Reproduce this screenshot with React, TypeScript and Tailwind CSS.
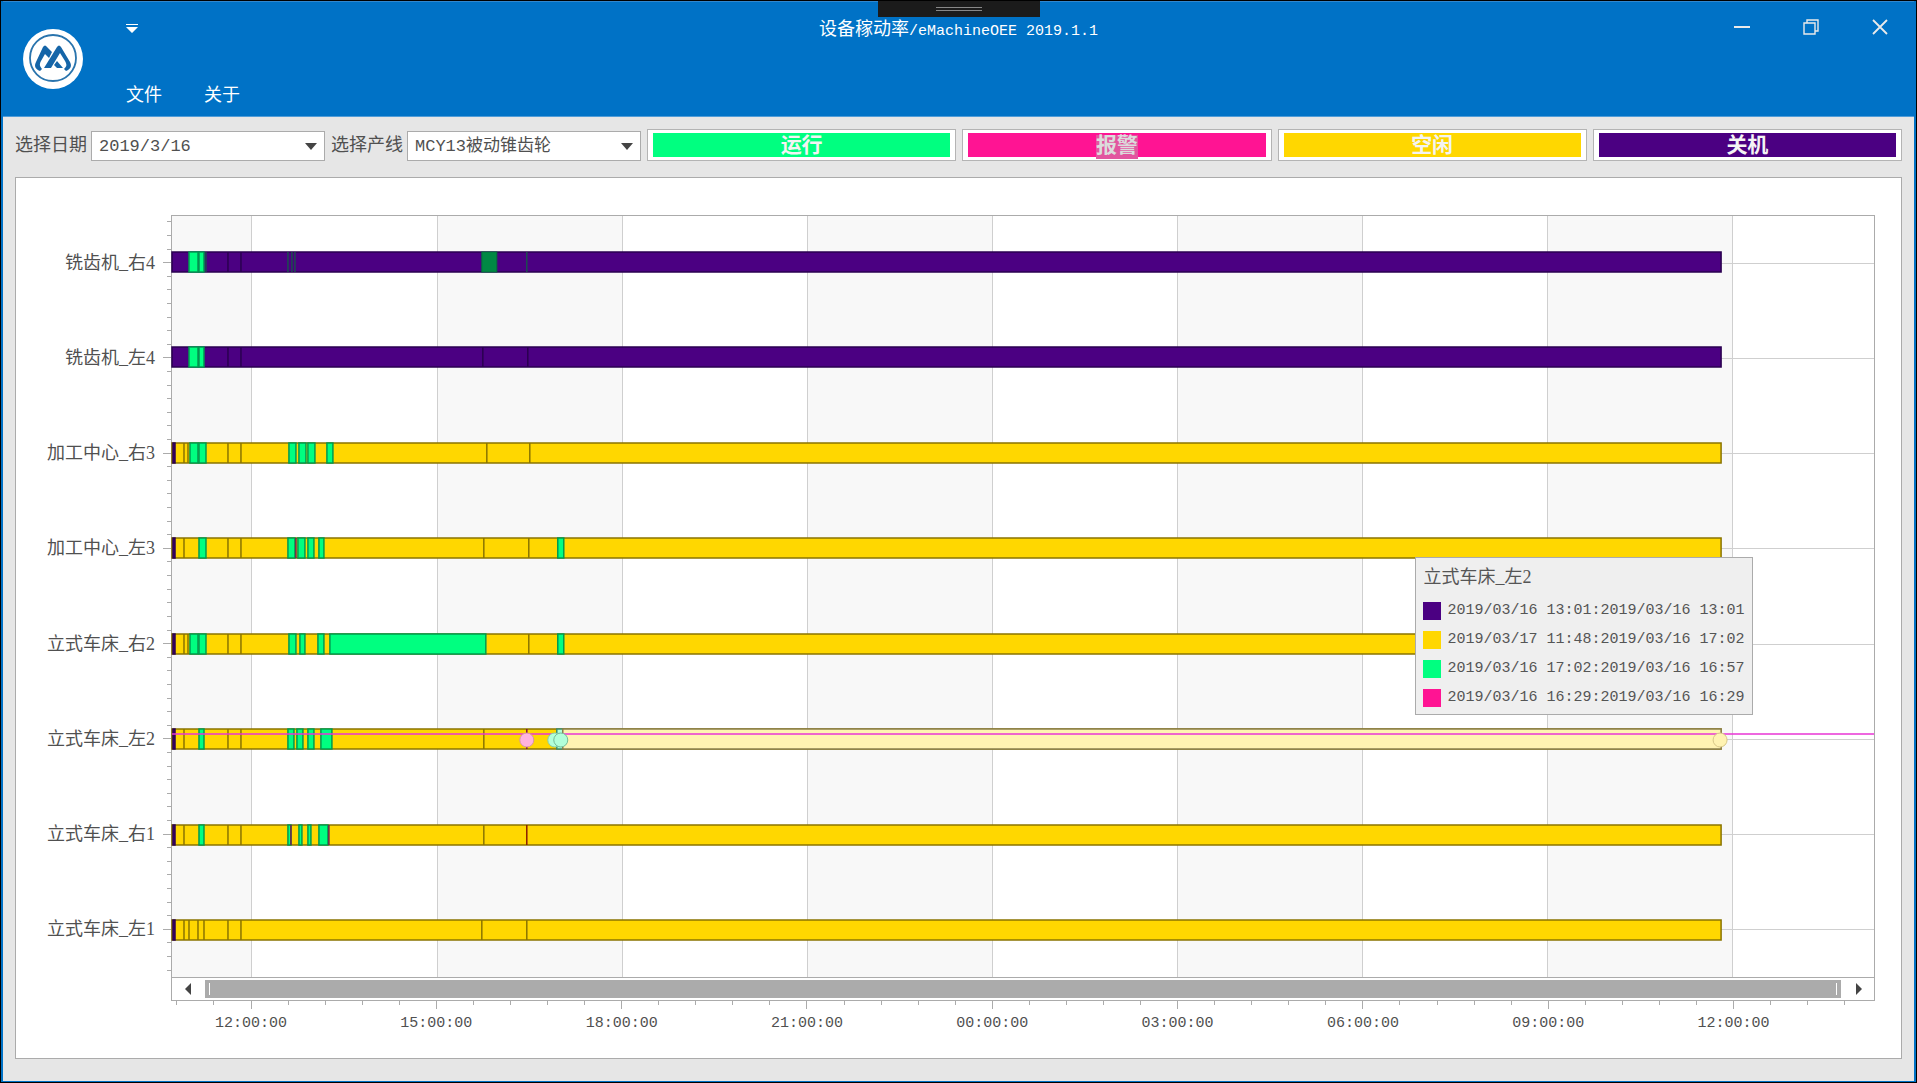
import { Fragment } from "react";

type Status = "run" | "alarm" | "idle" | "off";

const COLOR: Record<Status, string> = {
  run: "#00ff80",
  alarm: "#ff1493",
  idle: "#ffd700",
  off: "#4b0082",
};
const EDGE: Record<Status, string> = {
  run: "#009a50",
  alarm: "#801040",
  idle: "#8a7400",
  off: "#2a0050",
};

// Axis units: the visible time span is 1703 units, three hours are 185.2 units.
const SPAN = 1703;
const FIRST_MAJOR = 80;
const MAJOR = 185.2;
const BAR_END = 1550;
const pct = (u: number) => `${(u / SPAN) * 100}%`;

type Segment = [number, number, Status];
type Mark = [number, string];
type Row = { name: string; base: Status; segs: Segment[]; marks: Mark[] };

const Y = "#8a7400";
const P = "#2a0050";
const G = "#1c4c50";

const ROWS: Row[] = [
  {
    name: "铣齿机_右4",
    base: "off",
    segs: [[17, 26, "run"], [27, 32, "run"]],
    marks: [[34, G], [56, P], [69, P], [116, G], [120, G], [123, G], [355, G]],
  },
  {
    name: "铣齿机_左4",
    base: "off",
    segs: [[17, 26, "run"], [27, 32, "run"]],
    marks: [[56, P], [69, P], [311, P], [356, P]],
  },
  {
    name: "加工中心_右3",
    base: "idle",
    segs: [[1, 3, "off"], [18, 26, "run"], [27, 34, "run"], [117, 124, "run"], [127, 134, "run"], [136, 143, "run"], [155, 161, "run"]],
    marks: [[12, Y], [16, Y], [56, Y], [69, Y], [315, Y], [358, Y]],
  },
  {
    name: "加工中心_左3",
    base: "idle",
    segs: [[1, 3, "off"], [27, 34, "run"], [116, 123, "run"], [126, 133, "run"], [136, 142, "run"], [147, 152, "run"], [386, 392, "run"]],
    marks: [[12, Y], [56, Y], [69, Y], [124, "#702050"], [312, Y], [357, Y]],
  },
  {
    name: "立式车床_右2",
    base: "idle",
    segs: [[1, 3, "off"], [18, 26, "run"], [27, 34, "run"], [117, 124, "run"], [128, 133, "run"], [146, 152, "run"], [158, 314, "run"], [386, 392, "run"]],
    marks: [[12, Y], [16, Y], [56, Y], [69, Y], [357, Y]],
  },
  {
    name: "立式车床_左2",
    base: "idle",
    segs: [[1, 3, "off"], [27, 32, "run"], [116, 122, "run"], [125, 131, "run"], [136, 142, "run"], [149, 160, "run"]],
    marks: [[12, Y], [56, Y], [69, Y], [312, Y], [355, "#801040"]],
  },
  {
    name: "立式车床_右1",
    base: "idle",
    segs: [[1, 3, "off"], [27, 32, "run"], [116, 119, "run"], [127, 130, "run"], [136, 139, "run"], [147, 156, "run"]],
    marks: [[12, Y], [56, Y], [69, Y], [119, "#702050"], [157, "#702050"], [312, Y], [355, "#8a1c00"]],
  },
  {
    name: "立式车床_左1",
    base: "idle",
    segs: [[1, 3, "off"]],
    marks: [[12, Y], [17, Y], [26, Y], [32, Y], [56, Y], [69, Y], [310, Y], [355, Y]],
  },
];

const TIMES = ["12:00:00", "15:00:00", "18:00:00", "21:00:00", "00:00:00", "03:00:00", "06:00:00", "09:00:00", "12:00:00"];

const LEGEND: { label: string; bg: string; selected?: boolean }[] = [
  { label: "运行", bg: "bg-[#00ff80]" },
  { label: "报警", bg: "bg-[#ff1493]", selected: true },
  { label: "空闲", bg: "bg-[#ffd700]" },
  { label: "关机", bg: "bg-[#4b0082]" },
];

const TIPS: { bg: string; text: string }[] = [
  { bg: "bg-[#4b0082]", text: "2019/03/16 13:01:2019/03/16 13:01" },
  { bg: "bg-[#ffd700]", text: "2019/03/17 11:48:2019/03/16 17:02" },
  { bg: "bg-[#00ff80]", text: "2019/03/16 17:02:2019/03/16 16:57" },
  { bg: "bg-[#ff1493]", text: "2019/03/16 16:29:2019/03/16 16:29" },
];

// Sets Latin runs at half the width of the Chinese characters.
function Mixed({ text }: { text: string }) {
  return (
    <>
      {text.split(/([\x20-\x7e]+)/).map((run, i) =>
        /^[\x20-\x7e]/.test(run) ? (
          <span key={i} className="text-[15px]">{run}</span>
        ) : (
          <Fragment key={i}>{run}</Fragment>
        ),
      )}
    </>
  );
}

function MachineName({ name }: { name: string }) {
  return <span className="font-['Liberation_Serif','Noto_Sans_CJK_SC',serif] whitespace-nowrap">{name}</span>;
}

function Logo() {
  return (
    <svg viewBox="0 0 60 60" className="size-15" aria-label="Logo">
      <circle cx="30" cy="30" r="30" fill="#fff" />
      <circle cx="30" cy="29" r="23" fill="none" stroke="#2a74ad" strokeWidth="1.8" />
      <g fill="#1565a8">
        <path d="M17 42 C12 40 11 37 13 33 L20 18 Q22 15 24 18 L29 23 L26 29 L22 25 L18 32 C16 36 17 37 19 40 Z" />
        <path d="M34 18 Q36 15 38 18 L47 33 C49 37 48 40 43 42 L41 40 C44 37 44 36 42 32 L37 24 L28 39 H21 Z" />
        <path d="M34 32 L40 39 H34 L31 36 Z" />
      </g>
    </svg>
  );
}

function Combo({ id, label, value }: { id: string; label: string; value: string }) {
  return (
    <div className="flex items-center gap-1 pt-0.5">
      <label htmlFor={id} className="whitespace-nowrap">{label}</label>
      <div className="relative flex">
        <select id={id} className="h-[30px] w-[234px] appearance-none border border-[#ababab] bg-white pt-0.5 pl-[7px] text-[17px] leading-6 text-[#505050]">
          <option>{value}</option>
        </select>
        <svg viewBox="0 0 12 7" className="pointer-events-none absolute top-3 right-2 h-[7px] w-3">
          <path d="M0 0 H12 L6 7 Z" fill="#444" />
        </svg>
      </div>
    </div>
  );
}

function Plot() {
  const majors = TIMES.map((_, i) => FIRST_MAJOR + i * MAJOR);
  return (
    <div className="relative min-h-0 border border-b-0 border-[#ababab] bg-white">
      <svg className="absolute inset-0 size-full" shapeRendering="crispEdges">
        <rect x="0" y="0" width={pct(FIRST_MAJOR)} height="100%" fill="#f8f8f8" />
        {[1, 3, 5, 7].map((i) => (
          <rect key={i} x={pct(majors[i])} y="0" width={pct(MAJOR)} height="100%" fill="#f8f8f8" />
        ))}
        {majors.map((u, i) => (
          <line key={i} x1={pct(u)} x2={pct(u)} y1="0" y2="100%" stroke="#cfcfcf" />
        ))}
        {ROWS.map((_, i) => (
          <line key={i} x1="0" x2="100%" y1={`${(i + 0.5) * 12.5}%`} y2={`${(i + 0.5) * 12.5}%`} stroke="#cfcfcf" />
        ))}
      </svg>
      <div className="absolute inset-x-0 -top-0.5 -bottom-px grid grid-rows-8">
        {ROWS.map((row, r) => (
          <div key={row.name} className="flex items-center">
            <svg className="h-5 w-full overflow-visible">
              <rect x="0" y="0" width={pct(BAR_END)} height="20" fill={COLOR[row.base]} stroke={EDGE[row.base]} strokeWidth="1.5" />
              {r === 0 && <rect x={pct(310)} y="0" width={pct(15)} height="20" fill="#008844" stroke="#00703c" />}
              {row.segs.map(([a, b, s], i) => (
                <rect key={i} x={pct(a)} y="0" width={pct(b - a)} height="20" fill={COLOR[s]} stroke={EDGE[s]} strokeWidth="1.5" />
              ))}
              {row.marks.map(([u, c], i) => (
                <line key={i} x1={pct(u)} x2={pct(u)} y1="0" y2="20" stroke={c} strokeWidth="1.5" />
              ))}
              {r === 5 && (
                <g>
                  <rect x={pct(385)} y="0" width={pct(6)} height="20" fill="#b2ffd9" stroke="#3f8a68" strokeWidth="1.5" />
                  <rect x={pct(391)} y="0" width={pct(BAR_END - 391)} height="20" fill="#fff3b2" stroke="#8a7f4c" strokeWidth="1.5" />
                  <line x1="0" x2="100%" y1="5" y2="5" stroke="#e835d5" strokeWidth="1.5" />
                  <circle cx={pct(355)} cy="11" r="7" fill="#ffb3dd" stroke="#d897a0" />
                  <circle cx={pct(383)} cy="11" r="7" fill="#b2ffd9" stroke="#86cfa6" />
                  <circle cx={pct(389)} cy="11" r="7" fill="#b2ffd9" stroke="#74bd98" />
                  <circle cx={pct(1549)} cy="11" r="7" fill="#fff3b2" stroke="#d8c888" />
                </g>
              )}
            </svg>
          </div>
        ))}
      </div>
      <div role="tooltip" className="absolute top-[341px] left-[73%] ml-px flex flex-col border border-[#ababab] bg-[#efefef] px-[7px] pt-[3px] pb-0.5 text-[#555]">
        <div className="flex h-[35px] items-start leading-8"><MachineName name="立式车床_左2" /></div>
        {TIPS.map((t) => (
          <div key={t.text} className="flex h-[29px] items-center gap-1.5">
            <span className={`size-[18px] ${t.bg}`} />
            <span className="text-[15px] whitespace-nowrap">{t.text}</span>
          </div>
        ))}
      </div>
    </div>
  );
}

function Chart() {
  const minorX = Array.from({ length: 46 }, (_, i) => FIRST_MAJOR + (i - 2) * (MAJOR / 5)).filter((u) => u < SPAN);
  return (
    <section className="grid min-h-0 flex-1 grid-cols-[139px_16px_1fr] grid-rows-[1fr_24px_57px] border border-[#ababab] bg-white pt-[37px] pr-[26px]">
      <div className="grid grid-rows-8">
        {ROWS.map((row) => (
          <div key={row.name} className="flex items-center justify-end">
            <MachineName name={row.name} />
          </div>
        ))}
      </div>
      <svg className="size-full" shapeRendering="crispEdges">
        {Array.from({ length: 56 }, (_, i) => {
          const y = `${((i + 0.5) / 56) * 100}%`;
          return <line key={i} x1={i % 7 === 3 ? 8 : 12} x2="16" y1={y} y2={y} stroke="#ababab" />;
        })}
      </svg>
      <Plot />

      <div className="col-start-3 flex items-center border border-[#ababab] bg-white">
        <button aria-label="向左滚动" className="flex h-full w-[33px] items-center justify-center pr-0.5">
          <svg viewBox="0 0 6 12" className="h-3 w-1.5"><path d="M6 0 V12 L0 6 Z" fill="#444" /></svg>
        </button>
        <div className="flex h-[18px] flex-1 items-center justify-between bg-[#ababab] px-1">
          <span className="h-3 w-px bg-white" />
          <span className="h-3 w-px bg-white" />
        </div>
        <button aria-label="向右滚动" className="flex h-full w-[33px] items-center justify-center pl-0.5">
          <svg viewBox="0 0 6 12" className="h-3 w-1.5"><path d="M0 0 V12 L6 6 Z" fill="#444" /></svg>
        </button>
      </div>

      <svg className="col-start-3 size-full overflow-visible">
        <g shapeRendering="crispEdges">
          {minorX.map((u, i) => (
            <line key={i} x1={pct(u)} x2={pct(u)} y1="0" y2={i % 5 === 2 ? 8 : 4} stroke="#ababab" />
          ))}
        </g>
        {TIMES.map((t, i) => (
          <text key={i} x={pct(FIRST_MAJOR + i * MAJOR)} y="26" textAnchor="middle" fontSize="15" fill="#505050">{t}</text>
        ))}
      </svg>
    </section>
  );
}

export default function App() {
  return (
    <div className="flex h-screen flex-col border border-black bg-[#e6e6e6] font-['Liberation_Mono','Noto_Sans_CJK_SC',monospace] text-[18px] leading-6 text-[#505050]">
      <div className="flex min-h-0 flex-1 flex-col border-x-2 border-b border-[#0072c6]">
        <header className="relative flex h-[116px] shrink-0 border-t border-b border-t-[#2f87cf] border-b-[#4f9cd8] bg-[#0072c6] text-white">
          <div className="flex w-[123px] items-start pt-[27px] pl-5"><Logo /></div>
          <div className="flex flex-col justify-between pt-[22px] pb-1.5">
            <button aria-label="自定义快速访问工具栏" className="w-3">
              <svg viewBox="0 0 12 9" className="h-[9px] w-3"><path d="M0 0 H12 V1 H0 Z M0 3 H12 L6 9 Z" fill="#fff" /></svg>
            </button>
            <nav className="flex gap-[42px]">
              <button className="h-7">文件</button>
              <button className="h-7">关于</button>
            </nav>
          </div>
          <h1 className="absolute inset-x-0 top-4 text-center"><Mixed text="设备稼动率/eMachineOEE 2019.1.1" /></h1>
          <div className="absolute -top-px left-1/2 flex h-4 w-[162px] -translate-x-1/2 items-center justify-center bg-[#1b1b1b]">
            <span className="h-1 w-[46px] border-y border-[#888]" />
          </div>
          <div className="absolute top-[9px] right-0 flex text-[#eaeaea]">
            <button aria-label="最小化" className="flex h-8 w-[69px] items-center justify-center">
              <svg viewBox="0 0 16 16" className="size-4"><path d="M0 8 H16" stroke="currentColor" strokeWidth="2" /></svg>
            </button>
            <button aria-label="还原" className="flex h-8 w-[69px] items-center justify-center">
              <svg viewBox="0 0 16 16" className="size-4" fill="none" stroke="currentColor" strokeWidth="1.4"><path d="M1 4 H12 V15 H1 Z M4 4 V1 H15 V12 H12" /></svg>
            </button>
            <button aria-label="关闭" className="flex h-8 w-[69px] items-center justify-center">
              <svg viewBox="0 0 16 16" className="size-4"><path d="M1 1 L15 15 M15 1 L1 15" stroke="currentColor" strokeWidth="1.8" /></svg>
            </button>
          </div>
        </header>
        <main className="flex min-h-0 flex-1 flex-col gap-4 px-3 pt-3 pb-[22px]">
          <div className="flex h-8 shrink-0 items-center gap-1.5">
            <Combo id="date" label="选择日期" value="2019/3/16" />
            <Combo id="line" label="选择产线" value="MCY13被动锥齿轮" />
            {LEGEND.map((l) => (
              <div key={l.label} className="h-8 flex-1 border border-[#b4b4b4] bg-white px-[5px] py-[3px]">
                <div className={`flex h-full items-center justify-center pt-1 text-[21px] leading-6 font-bold text-[#f4f4f4] ${l.bg}`}>
                  {l.selected ? <span className="bg-[#e2559f] text-[#dcdcdc]">{l.label}</span> : <span>{l.label}</span>}
                </div>
              </div>
            ))}
          </div>
          <Chart />
        </main>
      </div>
    </div>
  );
}
